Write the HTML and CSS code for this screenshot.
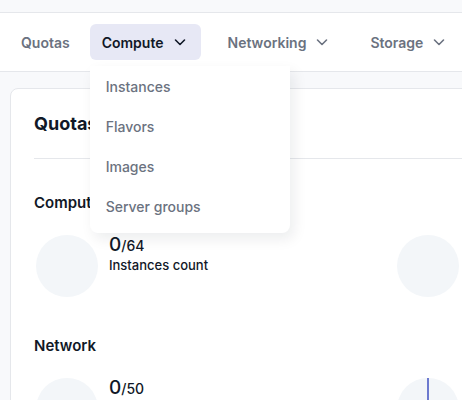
FILE: index.html
```html
<!DOCTYPE html>
<html lang="en">
<head>
    <meta charset="UTF-8">
    <meta name="viewport" content="width=device-width, initial-scale=1.0">
    <title>Quotas</title>
    <link rel="stylesheet" href="styles.css">
</head>
<body>
    <div class="topbar"></div>

    <nav class="nav">
        <a class="nav-item">Quotas</a>
        <div class="nav-group">
            <a class="nav-item active">Compute
                <svg class="chevron" viewBox="0 0 16 16"><path d="M3.5 6l4.5 4.5L12.5 6"/></svg>
            </a>
            <div class="dropdown">
                <a class="dropdown-item">Instances</a>
                <a class="dropdown-item">Flavors</a>
                <a class="dropdown-item">Images</a>
                <a class="dropdown-item">Server groups</a>
            </div>
        </div>
        <a class="nav-item">Networking
            <svg class="chevron" viewBox="0 0 16 16"><path d="M3.5 6l4.5 4.5L12.5 6"/></svg>
        </a>
        <a class="nav-item">Storage
            <svg class="chevron" viewBox="0 0 16 16"><path d="M3.5 6l4.5 4.5L12.5 6"/></svg>
        </a>
    </nav>

    <main class="main">
        <div class="card">
            <h1 class="card-title">Quotas</h1>
            <hr class="divider">

            <section class="section">
                <h2 class="section-title">Compute</h2>
                <div class="stats">
                    <div class="stat">
                        <svg class="pie" viewBox="0 0 62 62"><circle cx="31" cy="31" r="31"/></svg>
                        <div class="stat-text">
                            <div class="stat-value">0<span class="stat-max">/64</span></div>
                            <div class="stat-label">Instances count</div>
                        </div>
                    </div>
                    <div class="stat">
                        <svg class="pie" viewBox="0 0 62 62"><circle cx="31" cy="31" r="31"/></svg>
                    </div>
                </div>
            </section>

            <section class="section">
                <h2 class="section-title">Network</h2>
                <div class="stats">
                    <div class="stat">
                        <svg class="pie" viewBox="0 0 62 62"><circle cx="31" cy="31" r="31"/></svg>
                        <div class="stat-text">
                            <div class="stat-value">0<span class="stat-max">/50</span></div>
                        </div>
                    </div>
                    <div class="stat">
                        <svg class="pie" viewBox="0 0 62 62">
                            <circle cx="31" cy="31" r="31"/>
                            <line class="slice" x1="31" y1="0" x2="31" y2="31"/>
                        </svg>
                    </div>
                </div>
            </section>
        </div>
    </main>
</body>
</html>
```

FILE: styles.css
```css
* {
    margin: 0;
    padding: 0;
    box-sizing: border-box;
    font-family: Inter, "Noto Sans", sans-serif;
}

body {
    width: 462px;
    height: 400px;
    overflow: hidden;
    background-color: #f8f9fb;
    color: #111827;
}

.topbar {
    height: 13px;
    border-bottom: 1px solid #e5e7eb;
}

/* Navigation */
.nav {
    display: flex;
    align-items: center;
    height: 59px;
    padding-left: 9px;
    background-color: #fff;
    border-bottom: 1px solid #e5e7eb;
    position: relative;
    z-index: 2;
}

.nav-item {
    display: flex;
    align-items: center;
    height: 36px;
    padding: 0 12px;
    border-radius: 6px;
    font-size: 14px;
    font-weight: 600;
    color: #6b7280;
    cursor: pointer;
}

.nav-item + .nav-group {
    margin-left: 8px;
}

.nav-group + .nav-item {
    margin-left: 15px;
}

.nav-item + .nav-item {
    margin-left: 16px;
}

.nav-item.active {
    background-color: #e7e8f5;
    color: #111827;
}

.chevron {
    width: 16px;
    height: 16px;
    margin-left: 8px;
    fill: none;
    stroke: currentColor;
    stroke-width: 1.6;
    stroke-linecap: round;
    stroke-linejoin: round;
}

.nav-item.active .chevron {
    margin-right: 1px;
}

.nav-group {
    position: relative;
}

.dropdown {
    position: absolute;
    top: 42px;
    left: 0;
    width: 200px;
    padding-bottom: 7px;
    background-color: #fff;
    border-radius: 0 0 8px 8px;
    box-shadow: 4px 6px 14px rgba(17, 24, 39, 0.08);
}

.dropdown-item {
    display: flex;
    align-items: center;
    height: 40px;
    padding: 0 16px;
    font-size: 14px;
    font-weight: 500;
    color: #6b7280;
    cursor: pointer;
}

/* Content */
.main {
    padding: 16px 0 0 10px;
}

.card {
    width: 500px;
    height: 400px;
    padding: 22px 0 0 23px;
    background-color: #fff;
    border: 1px solid #e5e7eb;
    border-radius: 8px;
}

.card-title {
    font-size: 18px;
    font-weight: 700;
    line-height: 26px;
}

.divider {
    margin-top: 21px;
    border: none;
    border-top: 1px solid #e5e7eb;
}

.section {
    margin-top: 33px;
}

.section + .section {
    margin-top: 38px;
}

.section-title {
    font-size: 15px;
    font-weight: 600;
    line-height: 22px;
}

.stats {
    display: grid;
    grid-template-columns: 361px 1fr;
    margin-top: 21px;
}

.stat {
    display: flex;
    align-items: flex-start;
    gap: 11px;
}

.pie {
    width: 62px;
    height: 62px;
    margin-left: 2px;
    flex-shrink: 0;
}

.pie circle {
    fill: #f3f6f9;
}

.pie .slice {
    stroke: #4051c0;
    stroke-width: 1.5;
}

.stat-value {
    font-size: 19px;
    font-weight: 500;
    line-height: 20px;
}

.stat-max {
    font-size: 14px;
    font-weight: 500;
}

.stat-label {
    font-size: 13px;
    font-weight: 500;
    line-height: 18px;
}
```
